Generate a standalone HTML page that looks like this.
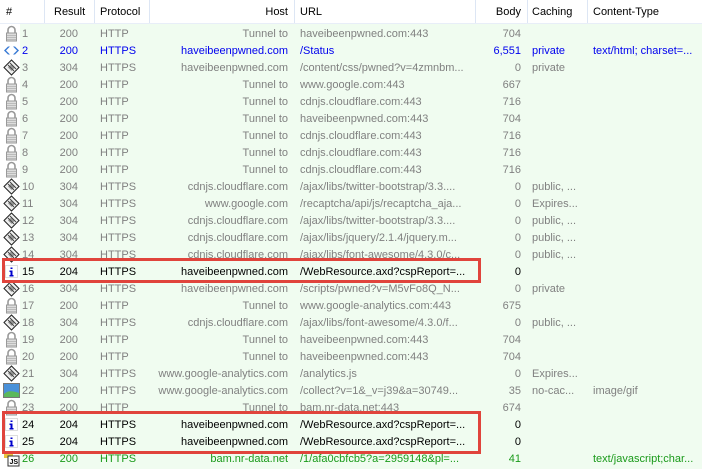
<!DOCTYPE html>
<html><head><meta charset="utf-8"><style>
*{margin:0;padding:0;box-sizing:border-box}
body{width:702px;height:469px;overflow:hidden;background:#fff;font-family:"Liberation Sans",sans-serif;font-size:11px;position:relative}
.hdr{position:absolute;left:0;top:0;width:702px;height:24px;background:#fff;color:#000;border-bottom:1px solid #e8eef8}
.hdr span{position:absolute;top:6px}
.sep{position:absolute;top:0;width:1px;height:23px;background:#dde6f4}
.bg{position:absolute;left:20px;top:24px;width:682px;height:445px;background:#f0fcf0}
.r{position:absolute;left:0;width:702px;height:17px;color:#808080}
.r span{position:absolute;top:3px;white-space:nowrap}
.n{left:22px}.res{right:624px}.pro{left:100px}.host{right:414px}.url{left:300px}.body{right:181px}.cach{left:532px}.ct{left:593px}
.ic{position:absolute;left:3px;top:0;width:17px;height:17px}
.blue{color:#0000ee}.blk{color:#000}.grn{color:#1a9a1a}
.box{position:absolute;border:3px solid #e0443c;left:2px;width:479px}
</style></head><body>
<div class="bg"></div>
<div class="hdr">
<span style="left:6px">#</span><span style="left:54px">Result</span><span style="left:100px">Protocol</span><span style="right:414px">Host</span><span style="left:300px">URL</span><span style="right:181px">Body</span><span style="left:532px">Caching</span><span style="left:593px">Content-Type</span>
<div class="sep" style="left:44px"></div><div class="sep" style="left:94px"></div><div class="sep" style="left:149px"></div><div class="sep" style="left:294px"></div><div class="sep" style="left:475px"></div><div class="sep" style="left:527px"></div><div class="sep" style="left:587px"></div>
</div>
<div id="rows"></div>
<svg width="0" height="0" style="position:absolute"><defs>
<symbol id="lock" viewBox="0 0 17 17"><path d="M5 8V5a3.5 3.5 0 0 1 7 0v3" fill="none" stroke="#999" stroke-width="1.6"/><rect x="3.5" y="8" width="10" height="8" fill="#ddd" stroke="#999"/><path d="M4 10.5h9M4 12.5h9M4 14.5h9" stroke="#bbb"/></symbol>
<symbol id="dia" viewBox="0 0 17 17"><path d="M1 8.5 8.5 1 16 8.5 8.5 16Z" fill="#eee" stroke="#222"/><path d="M5 8.5 8.5 5 12 8.5 8.5 12Z" fill="#999"/><path d="M7 4l6 6M5 6l6 6" stroke="#444"/></symbol>
<symbol id="arr" viewBox="0 0 17 17"><path d="M1 8.5 5 4.5 7 4.5 3 8.5 7 12.5 5 12.5Z M16 8.5 12 4.5 10 4.5 14 8.5 10 12.5 12 12.5Z" fill="#3a7bd5"/></symbol>
<symbol id="info" viewBox="0 0 17 17"><rect x="2.5" y="2.5" width="12" height="12" fill="#fff" stroke="#bbb" stroke-dasharray="1 1"/><rect x="7.5" y="4.5" width="2" height="1.5" fill="#00c"/><path d="M6.5 7.5h3v4.5h1v1.5h-4v-1.5h1v-3h-1z" fill="#00c"/></symbol>
<symbol id="img" viewBox="0 0 17 17"><rect x="0.5" y="1.5" width="16" height="14" fill="#4a90d9" stroke="#777"/><path d="M1 12c4-4 9-3 15-1v4H1z" fill="#5cb85c"/></symbol>
<symbol id="js" viewBox="0 0 17 17"><rect x="1" y="1" width="9" height="7" fill="#e8c440"/><rect x="5" y="6" width="11" height="10" fill="#fff" stroke="#333"/><text x="6.5" y="14" font-size="7" font-family="Liberation Sans" font-weight="bold" fill="#000">JS</text></symbol>
</defs></svg>
<script>
var D=[
["lock","1","200","HTTP","Tunnel to","haveibeenpwned.com:443","704","","",""],
["arr","2","200","HTTPS","haveibeenpwned.com","/Status","6,551","private","text/html; charset=...","blue"],
["dia","3","304","HTTPS","haveibeenpwned.com","/content/css/pwned?v=4zmnbm...","0","private","",""],
["lock","4","200","HTTP","Tunnel to","www.google.com:443","667","","",""],
["lock","5","200","HTTP","Tunnel to","cdnjs.cloudflare.com:443","716","","",""],
["lock","6","200","HTTP","Tunnel to","haveibeenpwned.com:443","704","","",""],
["lock","7","200","HTTP","Tunnel to","cdnjs.cloudflare.com:443","716","","",""],
["lock","8","200","HTTP","Tunnel to","cdnjs.cloudflare.com:443","716","","",""],
["lock","9","200","HTTP","Tunnel to","cdnjs.cloudflare.com:443","716","","",""],
["dia","10","304","HTTPS","cdnjs.cloudflare.com","/ajax/libs/twitter-bootstrap/3.3....","0","public, ...","",""],
["dia","11","304","HTTPS","www.google.com","/recaptcha/api/js/recaptcha_aja...","0","Expires...","",""],
["dia","12","304","HTTPS","cdnjs.cloudflare.com","/ajax/libs/twitter-bootstrap/3.3....","0","public, ...","",""],
["dia","13","304","HTTPS","cdnjs.cloudflare.com","/ajax/libs/jquery/2.1.4/jquery.m...","0","public, ...","",""],
["dia","14","304","HTTPS","cdnjs.cloudflare.com","/ajax/libs/font-awesome/4.3.0/c...","0","public, ...","",""],
["info","15","204","HTTPS","haveibeenpwned.com","/WebResource.axd?cspReport=...","0","","","blk"],
["dia","16","304","HTTPS","haveibeenpwned.com","/scripts/pwned?v=M5vFo8Q_N...","0","private","",""],
["lock","17","200","HTTP","Tunnel to","www.google-analytics.com:443","675","","",""],
["dia","18","304","HTTPS","cdnjs.cloudflare.com","/ajax/libs/font-awesome/4.3.0/f...","0","public, ...","",""],
["lock","19","200","HTTP","Tunnel to","haveibeenpwned.com:443","704","","",""],
["lock","20","200","HTTP","Tunnel to","haveibeenpwned.com:443","704","","",""],
["dia","21","304","HTTPS","www.google-analytics.com","/analytics.js","0","Expires...","",""],
["img","22","200","HTTPS","www.google-analytics.com","/collect?v=1&_v=j39&a=30749...","35","no-cac...","image/gif",""],
["lock","23","200","HTTP","Tunnel to","bam.nr-data.net:443","674","","",""],
["info","24","204","HTTPS","haveibeenpwned.com","/WebResource.axd?cspReport=...","0","","","blk"],
["info","25","204","HTTPS","haveibeenpwned.com","/WebResource.axd?cspReport=...","0","","","blk"],
["js","26","200","HTTPS","bam.nr-data.net","/1/afa0cbfcb5?a=2959148&pl=...","41","","text/javascript;char...","grn"]
];
var h="",cls=["n","res","pro","host","url","body","cach","ct"];
D.forEach(function(d,i){
 h+='<div class="r '+d[9]+'" style="top:'+(25+i*17)+'px"><svg class="ic"><use href="#'+d[0]+'"/></svg>';
 for(var k=0;k<8;k++){var t=d[k+1].replace(/&/g,"&amp;");h+='<span class="'+cls[k]+'">'+t+'</span>';}
 h+='</div>';
});
document.getElementById("rows").innerHTML=h;
</script>
<div class="box" style="top:258px;height:25px"></div>
<div class="box" style="top:411px;height:43px"></div>
</body></html>
